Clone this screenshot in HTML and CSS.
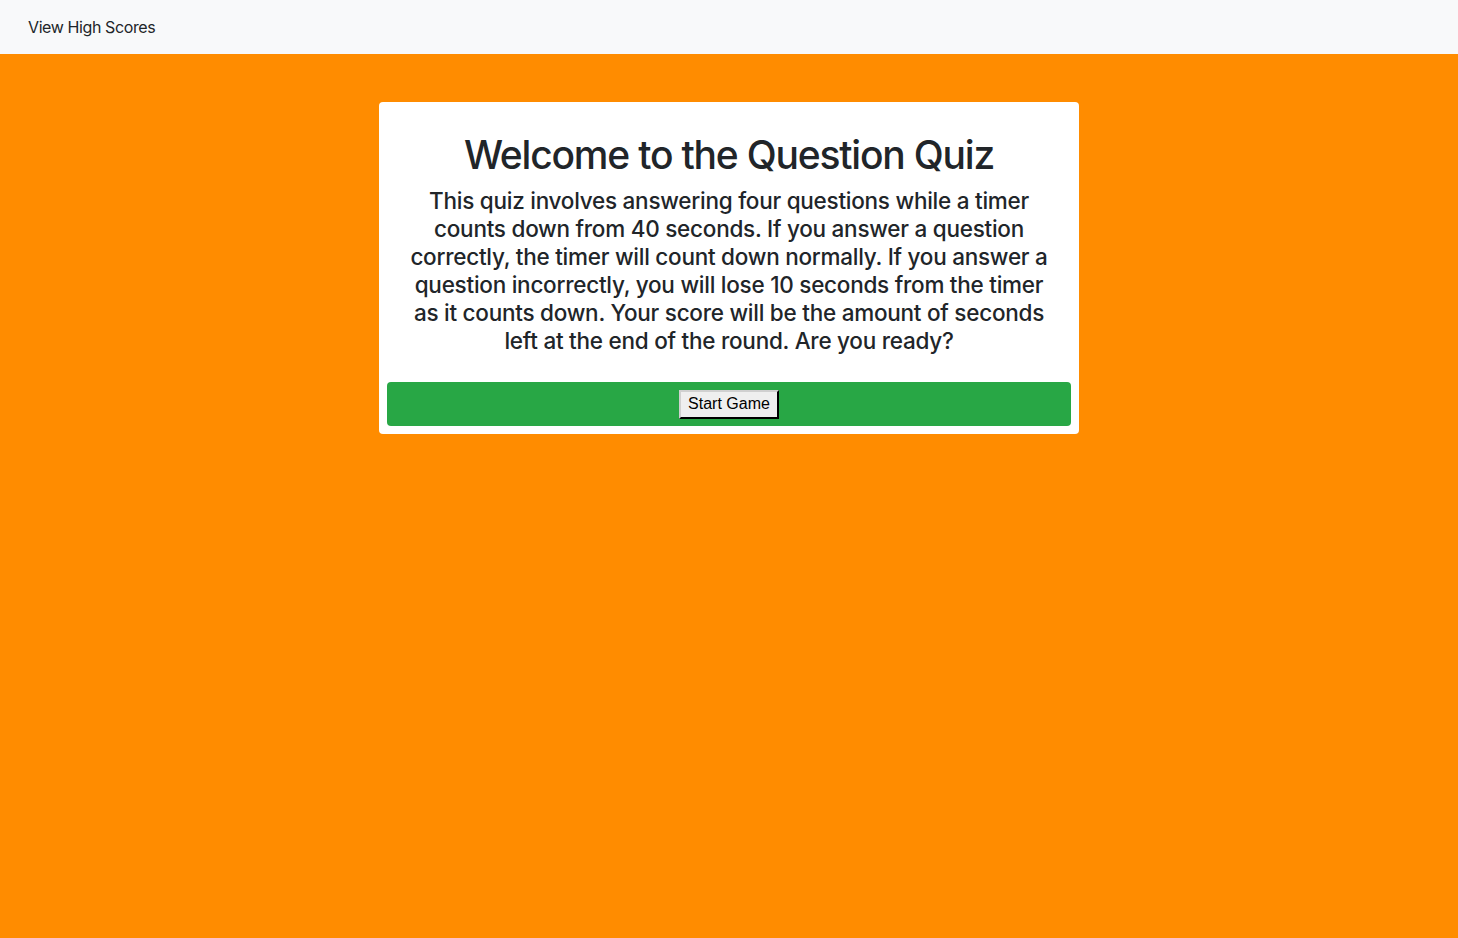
FILE: index.html
```html
<!DOCTYPE html>
<html lang="en">
<head>
<meta charset="utf-8">
<title>Question Quiz</title>
<link rel="stylesheet" href="styles.css">
</head>
<body>
<nav class="navbar">
  <a class="nav-link" href="#">View High Scores</a>
</nav>
<main class="main">
  <section class="card">
    <div class="card-text">
      <h1 class="title">Welcome to the Question Quiz</h1>
      <p class="intro">This quiz involves answering four questions while a timer counts down from 40 seconds. If you answer a question correctly, the timer will count down normally. If you answer a question incorrectly, you will lose 10 seconds from the timer as it counts down. Your score will be the amount of seconds left at the end of the round. Are you ready?</p>
    </div>
    <div class="start-bar">
      <button class="start-btn" type="button">Start Game</button>
    </div>
  </section>
</main>
</body>
</html>
```

FILE: styles.css
```css
html, body {
  margin: 0;
  padding: 0;
  height: 100%;
}
body {
  font-family: Inter, "Noto Sans", sans-serif;
  color: #212529;
  background: #ff8c00;
  display: flex;
  flex-direction: column;
}
.navbar {
  height: 54px;
  background: #f8f9fa;
  display: flex;
  align-items: center;
  padding: 0 28px;
  flex-shrink: 0;
}
.nav-link {
  color: #212529;
  text-decoration: none;
  font-size: 16px;
  font-weight: 400;
  letter-spacing: -0.4px;
}
.main {
  display: flex;
  justify-content: center;
  padding-top: 48px;
}
.card {
  width: 700px;
  box-sizing: border-box;
  background: #fff;
  border-radius: 4px;
  padding: 8px;
}
.card-text {
  padding: 21px 20px 27px;
  text-align: center;
}
.title {
  margin: 0 0 8px;
  font-size: 39px;
  line-height: 48px;
  font-weight: 500;
  letter-spacing: -1.2px;
}
.intro {
  margin: 0;
  font-size: 22.5px;
  line-height: 28px;
  font-weight: 500;
  letter-spacing: -0.25px;
}
.start-bar {
  background: #28a745;
  border-radius: 4px;
  height: 44px;
  display: flex;
  align-items: center;
  justify-content: center;
}
.start-btn {
  font-family: "Liberation Sans", Arial, sans-serif;
  font-size: 16px;
  height: 29px;
  padding: 0 7px;
  background: #efefef;
  color: #000;
  border: 2px outset #767676;
  border-color: #d0d0d0 #333 #333 #d0d0d0;
}
```
